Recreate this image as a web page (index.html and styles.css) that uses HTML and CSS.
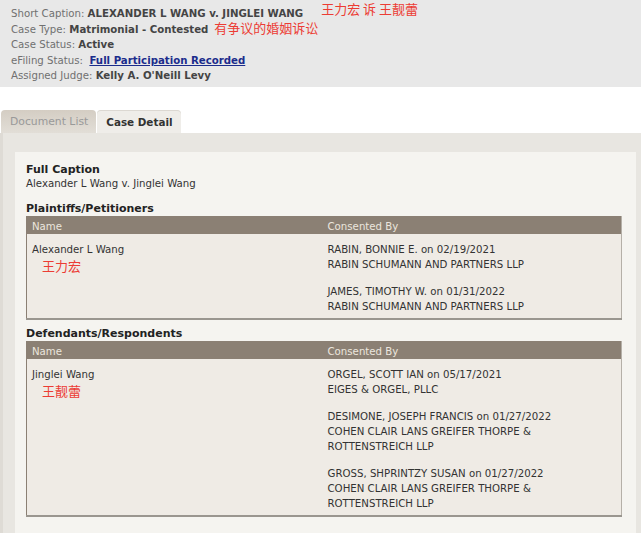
FILE: index.html
```html
<!DOCTYPE html>
<html lang="en">
<head>
    <meta charset="UTF-8">
    <title>Case Detail</title>
    <link rel="stylesheet" href="styles.css">
</head>
<body>
    <div class="case-info">
        <div>Short Caption: <b>ALEXANDER L WANG v. JINGLEI WANG</b><span class="note note-title">王力宏 诉 王靓蕾</span></div>
        <div>Case Type: <b>Matrimonial - Contested</b><span class="note note-type">有争议的婚姻诉讼</span></div>
        <div>Case Status: <b>Active</b></div>
        <div>eFiling Status: &nbsp;<a href="#" class="status-link">Full Participation Recorded</a></div>
        <div>Assigned Judge: <b>Kelly A. O'Neill Levy</b></div>
    </div>

    <div class="tabs">
        <span class="tab">Document List</span>
        <span class="tab active">Case Detail</span>
    </div>

    <div class="panel">
        <div class="detail">
            <h4>Full Caption</h4>
            <div class="caption">Alexander L Wang v. Jinglei Wang</div>

            <h4>Plaintiffs/Petitioners</h4>
            <table class="parties">
                <thead>
                    <tr><th class="col-name">Name</th><th>Consented By</th></tr>
                </thead>
                <tbody>
                    <tr>
                        <td>Alexander L Wang<div class="note note-name">王力宏</div></td>
                        <td>
                            <p>RABIN, BONNIE E. on 02/19/2021<br>RABIN SCHUMANN AND PARTNERS LLP</p>
                            <p>JAMES, TIMOTHY W. on 01/31/2022<br>RABIN SCHUMANN AND PARTNERS LLP</p>
                        </td>
                    </tr>
                </tbody>
            </table>

            <h4>Defendants/Respondents</h4>
            <table class="parties">
                <thead>
                    <tr><th class="col-name">Name</th><th>Consented By</th></tr>
                </thead>
                <tbody>
                    <tr>
                        <td>Jinglei Wang<div class="note note-name">王靓蕾</div></td>
                        <td>
                            <p>ORGEL, SCOTT IAN on 05/17/2021<br>EIGES &amp; ORGEL, PLLC</p>
                            <p>DESIMONE, JOSEPH FRANCIS on 01/27/2022<br>COHEN CLAIR LANS GREIFER THORPE &amp;<br>ROTTENSTREICH LLP</p>
                            <p>GROSS, SHPRINTZY SUSAN on 01/27/2022<br>COHEN CLAIR LANS GREIFER THORPE &amp;<br>ROTTENSTREICH LLP</p>
                        </td>
                    </tr>
                </tbody>
            </table>
        </div>
    </div>
</body>
</html>
```

FILE: styles.css
```css
body {
    margin: 0;
    font-family: "DejaVu Sans", Verdana, sans-serif;
    font-size: 10.2px;
    color: #333;
    background-color: #fff;
}
b {
    color: #444;
}
.case-info {
    background-color: #e8e8e8;
    color: #707070;
    padding: 6px 11px 3px;
    height: 78px;
    line-height: 15.5px;
}
.status-link {
    color: #1b2c8c;
    font-weight: bold;
}
.note {
    color: #ec3c34;
    font-family: "Noto Sans CJK SC", sans-serif;
    font-size: 13px;
}
.case-info .note {
    line-height: 0;
}
.note-title {
    margin-left: 18px;
    position: relative;
    top: -3px;
}
.note-type {
    margin-left: 6px;
}
.note-name {
    margin: 1px 0 0 10px;
    line-height: 16px;
}
.tabs {
    display: flex;
    gap: 1px;
    margin-top: 23px;
    padding-left: 1px;
}
.tab {
    height: 23px;
    line-height: 24px;
    padding: 0 8px 0 9px;
    border-radius: 4px 4px 0 0;
    font-size: 10.8px;
    white-space: nowrap;
}
.tab:first-child {
    color: #999;
    background: linear-gradient(#d4cdc3, #e2ded7);
}
.tab.active {
    color: #333;
    font-weight: bold;
    font-size: 10.4px;
    background-color: #efede9;
    box-shadow: inset 0 1px 0 #dcd8d2;
}
.panel {
    background-color: #e8e6e1;
    border-left: 3px solid #dedbd5;
    padding: 19px 5px 5px 12px;
}
.detail {
    background-color: #f5f4f0;
    padding: 11px 14px 14px 11px;
}
h4 {
    margin: 0;
    font-size: 11px;
    line-height: 14px;
    color: #222;
}
.caption {
    line-height: 14px;
    margin-bottom: 11px;
}
.parties {
    width: 100%;
    border-collapse: collapse;
    background-color: #efebe5;
    border-left: 1px solid #8b8074;
    border-right: 1px solid #b5b0a8;
    border-bottom: 2px solid #9a968f;
    margin-bottom: 7px;
    line-height: 15px;
}
.parties th {
    background-color: #8b8074;
    color: #ebe6de;
    font-weight: normal;
    text-align: left;
    height: 18px;
    padding: 3px 5px 0;
    box-sizing: border-box;
}
.col-name {
    width: 296px;
}
.parties td {
    vertical-align: top;
    padding: 8px 5px 4px;
}
.parties p {
    margin: 0 0 12px;
}
.parties p:last-child {
    margin-bottom: 0;
}
```
